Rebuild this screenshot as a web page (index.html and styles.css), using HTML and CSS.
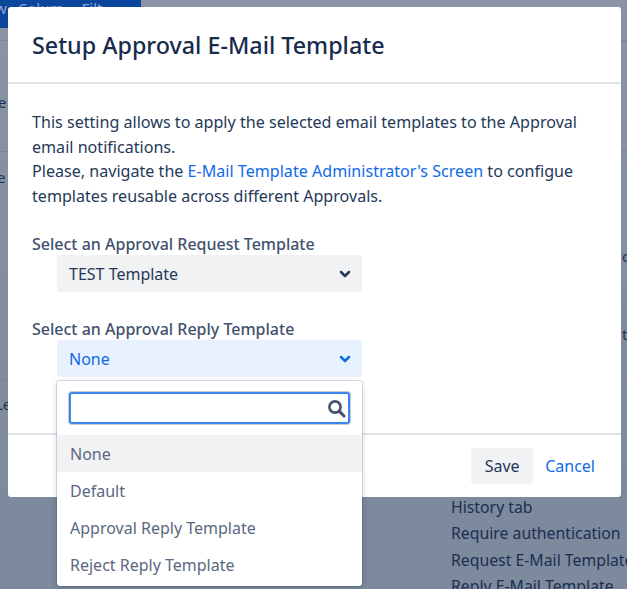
FILE: index.html
```html
<!DOCTYPE html>
<html lang="en">
  <head>
    <meta charset="UTF-8" />
    <title>Setup Approval E-Mail Template</title>
    <link rel="stylesheet" href="styles.css">
  </head>
  <body>
    <div class="page">
      <div class="topbar">
        <span class="topbar-first">w</span><span>Colum</span><span class="topbar-last">Filt</span>
      </div>
      <span class="bg-line bg-line-top"></span>
      <span class="bg-line bg-line-mid"></span>
      <span class="bg-line bg-line-low"></span>
      <span class="bg-frag frag-left1">e</span>
      <span class="bg-frag frag-left2">e</span>
      <span class="bg-frag frag-left3">Le</span>
      <span class="bg-frag frag-right1">c</span>
      <span class="bg-frag frag-right2">t</span>
      <ul class="bg-list">
        <li>History tab</li>
        <li>Require authentication</li>
        <li>Request E-Mail Template</li>
        <li>Reply E-Mail Template</li>
      </ul>
    </div>

    <div class="dialog">
      <header class="dialog-header">
        <h2>Setup Approval E-Mail Template</h2>
      </header>
      <div class="dialog-body">
        <p class="intro">
          This setting allows to apply the selected email templates to the Approval
          email notifications.<br />
          Please, navigate the <a href="#">E-Mail Template Administrator's Screen</a> to configue
          templates reusable across different Approvals.
        </p>
        <div class="field">
          <label>Select an Approval Request Template</label>
          <div class="select">
            <span>TEST Template</span>
            <svg class="chevron" width="12" height="8" viewBox="0 0 12 8"><path d="M2 2l4 4 4-4" fill="none" stroke="currentColor" stroke-width="2.5" stroke-linecap="round" stroke-linejoin="round"/></svg>
          </div>
        </div>
        <div class="field">
          <label>Select an Approval Reply Template</label>
          <div class="select select-open">
            <span>None</span>
            <svg class="chevron" width="12" height="8" viewBox="0 0 12 8"><path d="M2 2l4 4 4-4" fill="none" stroke="currentColor" stroke-width="2.5" stroke-linecap="round" stroke-linejoin="round"/></svg>
          </div>
        </div>
      </div>
      <footer class="dialog-footer">
        <button type="button" class="btn-save">Save</button>
        <a href="#" class="btn-cancel">Cancel</a>
      </footer>
    </div>

    <div class="dropdown">
      <div class="search-box">
        <div class="search">
          <svg width="19" height="19" viewBox="0 0 19 19"><circle cx="8" cy="8" r="5.6" fill="none" stroke="#42526e" stroke-width="2.6"/><path d="M12.4 12.4l4.6 4.6" stroke="#42526e" stroke-width="3" stroke-linecap="round"/></svg>
        </div>
      </div>
      <ul class="options">
        <li class="active">None</li>
        <li>Default</li>
        <li>Approval Reply Template</li>
        <li>Reject Reply Template</li>
      </ul>
    </div>
  </body>
</html>
```

FILE: styles.css
```css
* {
  box-sizing: border-box;
}

html,
body {
  height: 100%;
}

body {
  margin: 0;
  overflow: hidden;
  background: #8993a4;
  color: #172b4d;
  font-family: "Noto Sans", "Open Sans", sans-serif;
  font-size: 16px;
}

ul {
  list-style: none;
  margin: 0;
  padding: 0;
}

a {
  color: #0f6ae8;
  text-decoration: none;
}

/* page behind the overlay */
.page {
  position: absolute;
  inset: 0;
  overflow: hidden;
  background: linear-gradient(to bottom, #8a94a5, #7d899c 85%);
}

.topbar {
  width: 141px;
  height: 28px;
  display: flex;
  gap: 11px;
  background: #0a469c;
  color: #8aa6cf;
  line-height: 16px;
  font-size: 15px;
  overflow: hidden;
}

.topbar-first {
  margin-left: -5px;
}

.topbar-last {
  margin-left: 7px;
}

.bg-line {
  position: absolute;
  height: 1px;
  left: 0;
  right: 0;
  background: #7b8597;
}

.bg-line-top { top: 40px; }
.bg-line-mid { top: 151px; }
.bg-line-low { top: 380px; }

.bg-frag {
  position: absolute;
  color: #1d3255;
  font-size: 15px;
  line-height: 20px;
}

.frag-left1 { top: 92px; left: -2px; }
.frag-left2 { top: 167px; left: -3px; }
.frag-left3 { top: 394px; left: -5px; }
.frag-right1 { top: 246px; left: 622px; }
.frag-right2 { top: 324px; left: 622px; }

.bg-list {
  position: absolute;
  top: 494px;
  left: 451px;
  width: 176px;
  white-space: nowrap;
  overflow: hidden;
  color: #1a2f52;
  font-size: 15.8px;
  line-height: 26.3px;
}

/* dialog */
.dialog {
  position: absolute;
  top: 7px;
  left: 8px;
  width: 613px;
  height: 490px;
  display: flex;
  flex-direction: column;
  background: #fff;
  border-radius: 3px;
}

.dialog-header {
  height: 77px;
  padding: 0 24px;
  display: flex;
  align-items: center;
  border-bottom: 2px solid #dfe3e8;
}

.dialog-header h2 {
  margin: 0;
  color: #172b4d;
  font-size: 23.3px;
  font-weight: 500;
}

.dialog-body {
  flex: 1;
  padding: 26px 24px 0;
  border-bottom: 2px solid #dfe3e8;
}

.intro {
  margin: 0 0 25px;
  color: #253858;
  font-size: 16.1px;
  line-height: 24.6px;
}

.field {
  margin-bottom: 26px;
}

.field label {
  display: block;
  color: #42526e;
  font-size: 16px;
  font-weight: 500;
  line-height: 22px;
}

.select {
  width: 305px;
  height: 37px;
  margin-left: 25px;
  padding: 0 11px 0 12px;
  display: flex;
  align-items: center;
  justify-content: space-between;
  background: #f1f2f4;
  border-radius: 3px;
  color: #253858;
}

.select-open {
  background: #e8f1fe;
  color: #0f6ae8;
}

.dialog-footer {
  height: 62px;
  padding: 0 26px 1px 0;
  display: flex;
  align-items: center;
  justify-content: flex-end;
  gap: 12px;
}

.btn-save {
  width: 62px;
  height: 36px;
  border: 0;
  border-radius: 3px;
  background: #f1f2f4;
  color: #253858;
  font: inherit;
}

/* dropdown menu lies over the dialog */
.dropdown {
  position: absolute;
  top: 381px;
  left: 57px;
  width: 305px;
  height: 205px;
  background: #fff;
  border-radius: 3px;
  box-shadow: 0 0 0 1px rgba(9, 30, 66, 0.13), 0 2px 6px rgba(9, 30, 66, 0.2);
}

.search-box {
  padding: 11px 12px 0 12px;
  height: 54px;
}

.search {
  height: 32px;
  padding-right: 2px;
  display: flex;
  align-items: center;
  justify-content: flex-end;
  border: 2.5px solid #3d85f0;
  border-radius: 3px;
  box-shadow: 0 0 0 1px #c5cbd4;
}

.options li {
  height: 37px;
  padding-left: 13px;
  display: flex;
  align-items: center;
  color: #5a6880;
}

.options .active {
  background: #f1f2f4;
}
```
